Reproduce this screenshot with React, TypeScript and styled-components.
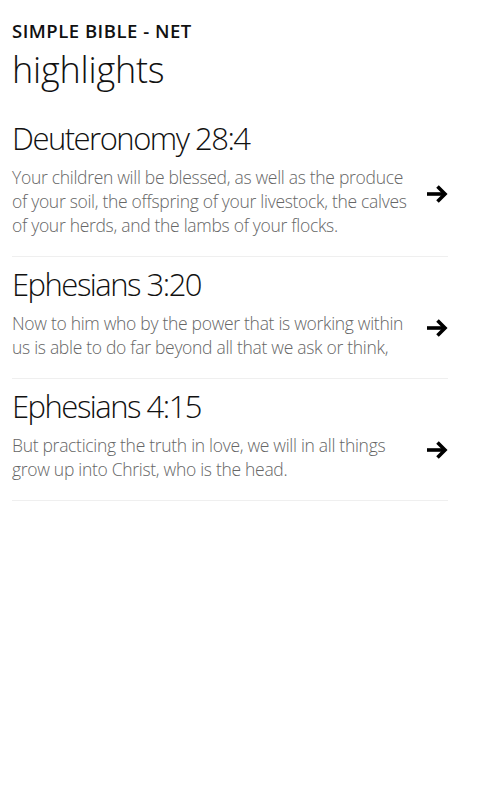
import React from "react";
import styled, { createGlobalStyle } from "styled-components";

const Global = createGlobalStyle`
  html, body { margin: 0; padding: 0; background: #ffffff; }
  body { font-family: "Open Sans", "Noto Sans", sans-serif; color: #000; }
`;

const Page = styled.div`
  width: 486px;
  min-height: 810px;
  padding: 19px 38px 0 12px;
  box-sizing: border-box;
`;

const AppTitle = styled.div`
  font-size: 18.5px;
  font-weight: 600;
  line-height: 24px;
  letter-spacing: 0.5px;
  color: #111;
`;

const PageTitle = styled.h1`
  margin: 5px 0 0 0;
  font-size: 36px;
  font-weight: 300;
  line-height: 44px;
  letter-spacing: -0.2px;
  color: #111;
`;

const List = styled.div`
  display: flex;
  flex-direction: column;
  margin-top: 26px;
`;

const Item = styled.div<{ $first?: boolean }>`
  padding: ${(p) => (p.$first ? "0" : "7px")} 0 19px 0;
  border-bottom: 1px solid #efefef;
`;

const Ref = styled.div`
  font-size: 31px;
  font-weight: 300;
  line-height: 40px;
  letter-spacing: -1.5px;
  color: #111;
`;

const Row = styled.div`
  display: flex;
  align-items: center;
  margin-top: 7px;
`;

const Verse = styled.div`
  width: 408px;
  font-size: 17.5px;
  font-weight: 300;
  line-height: 24px;
  letter-spacing: -0.3px;
  color: #666;
`;

const ArrowBox = styled.div`
  flex: 1;
  display: flex;
  justify-content: flex-end;
  margin-bottom: 14px;
`;

const Arrow = () => (
  <svg width="22" height="20" viewBox="0 0 22 20" fill="none">
    <path d="M1 10 H19" stroke="#000" strokeWidth="3.6" />
    <path d="M11.5 2.5 L19 10 L11.5 17.5" stroke="#000" strokeWidth="3.6" strokeLinejoin="miter" />
  </svg>
);

const items = [
  {
    ref: "Deuteronomy 28:4",
    text: "Your children will be blessed, as well as the produce of your soil, the offspring of your livestock, the calves of your herds, and the lambs of your flocks.",
  },
  {
    ref: "Ephesians 3:20",
    text: "Now to him who by the power that is working within us is able to do far beyond all that we ask or think,",
  },
  {
    ref: "Ephesians 4:15",
    text: "But practicing the truth in love, we will in all things grow up into Christ, who is the head.",
  },
];

export default function App() {
  return (
    <>
      <Global />
      <Page>
        <AppTitle>SIMPLE BIBLE - NET</AppTitle>
        <PageTitle>highlights</PageTitle>
        <List>
          {items.map((it, i) => (
            <Item key={it.ref} $first={i === 0}>
              <Ref>{it.ref}</Ref>
              <Row>
                <Verse>{it.text}</Verse>
                <ArrowBox>
                  <Arrow />
                </ArrowBox>
              </Row>
            </Item>
          ))}
        </List>
      </Page>
    </>
  );
}
